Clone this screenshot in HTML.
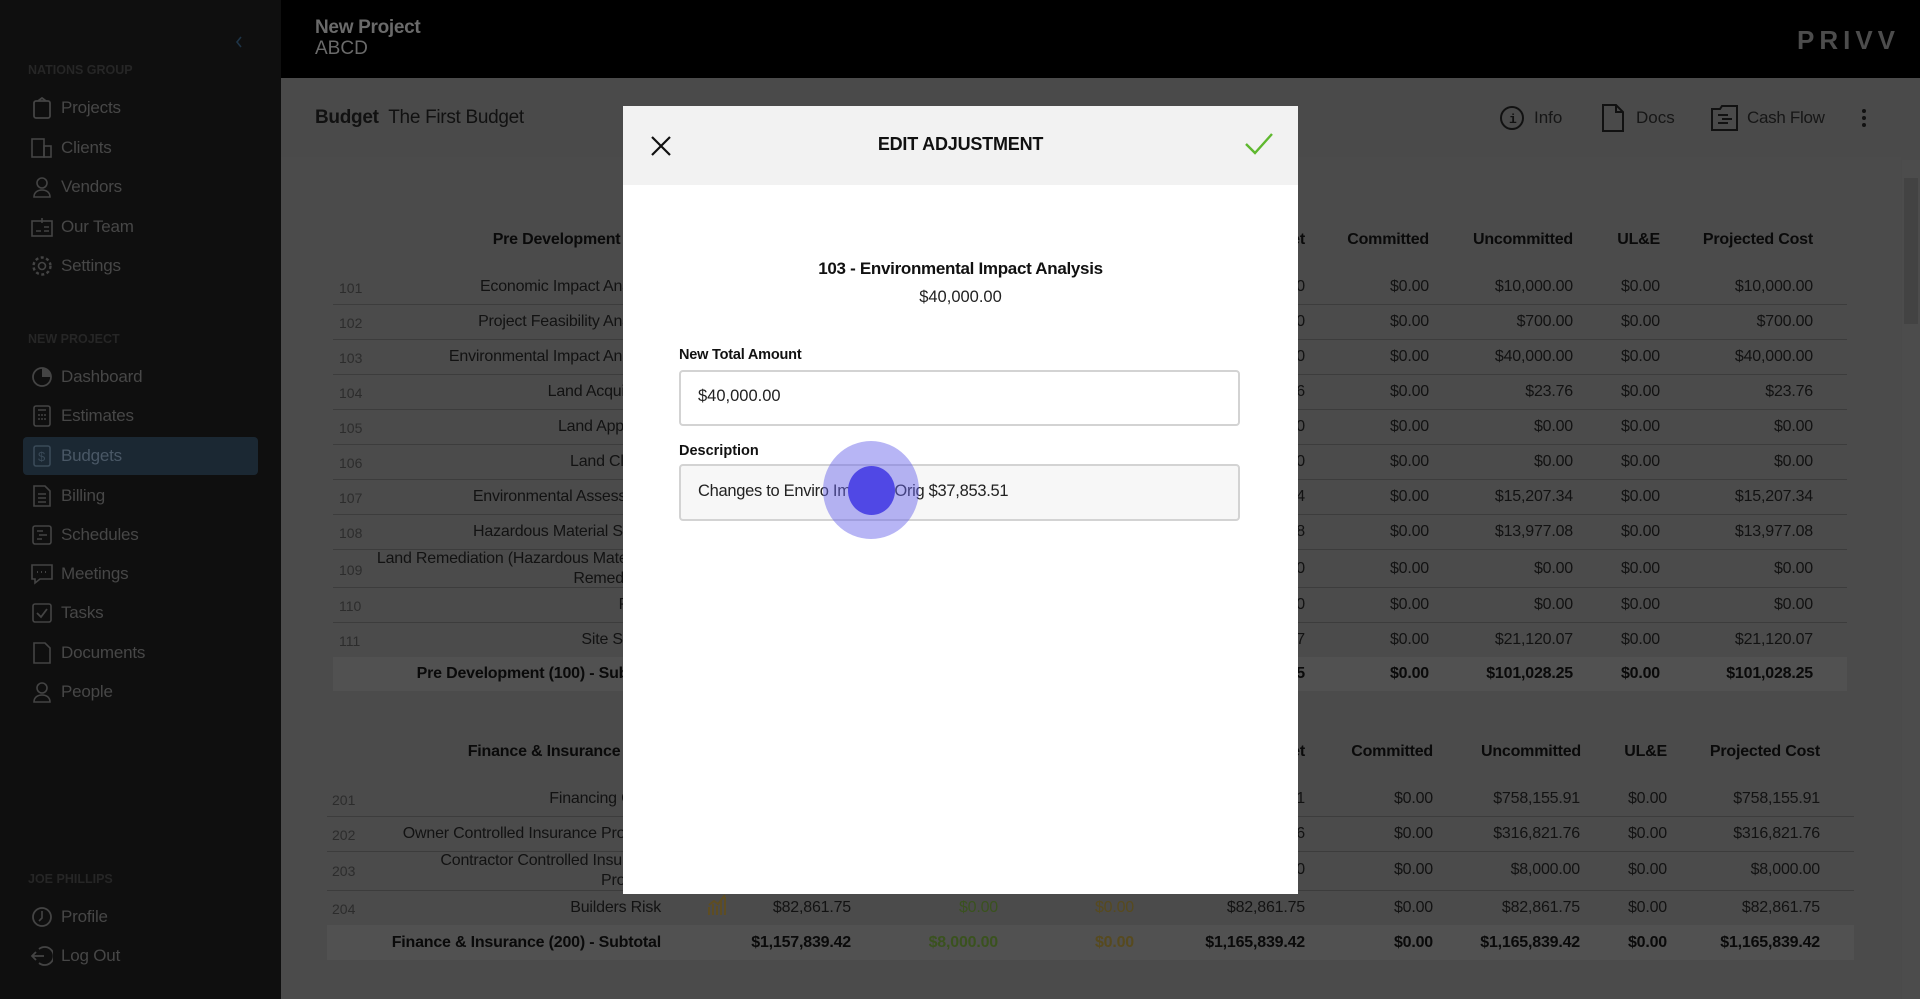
<!DOCTYPE html>
<html><head><meta charset="utf-8"><style>
*{margin:0;padding:0;box-sizing:border-box}
body{width:1920px;height:999px;overflow:hidden;background:#4a4a4a;font-family:"Liberation Sans",sans-serif;position:relative}
.a{position:absolute;white-space:nowrap}
.sb{position:absolute;left:0;top:0;width:281px;height:999px;background:#0f0f0f}
.nav{position:absolute;left:61px;font-size:17px;color:#474747;letter-spacing:-0.2px}
.grp{position:absolute;left:28px;font-size:12.5px;font-weight:bold;color:#262626}
.ic{position:absolute;left:31px;width:22px;height:22px}
.r{position:absolute;width:300px;text-align:right;font-size:16px;color:#121212;white-space:nowrap;letter-spacing:-0.2px}
.b{font-weight:bold;color:#0a0a0a}
.code{position:absolute;font-size:14px;color:#2c2c2c}
.line{position:absolute;height:1px;background:#3c3c3c}
</style></head><body>
<div class="sb">
<svg class="a" style="left:234px;top:35px" width="10" height="14" viewBox="0 0 10 14"><path d="M7 2L3 7l4 5" stroke="#1e3447" stroke-width="1.6" fill="none"/></svg>
<div class="grp" style="top:63px">NATIONS GROUP</div>
<svg class="ic" style="top:97px" viewBox="0 0 22 22"><rect x="3" y="4" width="16" height="17" rx="2" stroke="#444" stroke-width="1.8" fill="none"/><path d="M7 4l4-3 4 3" stroke="#444" stroke-width="1.8" fill="none"/></svg>
<div class="nav" style="top:98px">Projects</div>
<svg class="ic" style="top:137px" viewBox="0 0 22 22"><rect x="1" y="2" width="12" height="18" stroke="#444" stroke-width="1.6" fill="none"/><rect x="13" y="9" width="7" height="11" stroke="#444" stroke-width="1.6" fill="none"/></svg>
<div class="nav" style="top:138px">Clients</div>
<svg class="ic" style="top:176px" viewBox="0 0 22 22"><circle cx="11" cy="7" r="5" stroke="#444" stroke-width="1.6" fill="none"/><path d="M3 21c0-5 4-7 8-7s8 2 8 7z" stroke="#444" stroke-width="1.6" fill="none"/></svg>
<div class="nav" style="top:177px">Vendors</div>
<svg class="ic" style="top:216px" viewBox="0 0 22 22"><rect x="1" y="5" width="20" height="15" stroke="#444" stroke-width="1.6" fill="none"/><path d="M11 2v5M5 15h5M13 11h5M13 15h5" stroke="#444" stroke-width="1.6"/></svg>
<div class="nav" style="top:217px">Our Team</div>
<svg class="ic" style="top:255px" viewBox="0 0 22 22"><circle cx="11" cy="11" r="3.5" stroke="#444" stroke-width="1.6" fill="none"/><circle cx="11" cy="11" r="8.5" stroke="#444" stroke-width="2.4" stroke-dasharray="3 2.5" fill="none"/></svg>
<div class="nav" style="top:256px">Settings</div>
<div class="grp" style="top:332px">NEW PROJECT</div>
<svg class="ic" style="top:366px" viewBox="0 0 22 22"><circle cx="11" cy="11" r="9" stroke="#444" stroke-width="1.8" fill="none"/><path d="M11 2v9h9A9 9 0 0 0 11 2z" fill="#444"/></svg>
<div class="nav" style="top:367px">Dashboard</div>
<svg class="ic" style="top:405px" viewBox="0 0 22 22"><rect x="3" y="1" width="16" height="20" rx="2" stroke="#444" stroke-width="1.6" fill="none"/><path d="M7 5h8M7 10h2M10 10h2M13 10h2M7 14h2M10 14h2M13 14h2" stroke="#444" stroke-width="1.6"/></svg>
<div class="nav" style="top:406px">Estimates</div>
<div class="a" style="left:23px;top:437px;width:235px;height:38px;background:#1b2833;border-radius:4px"></div>
<svg class="ic" style="top:445px" viewBox="0 0 22 22"><rect x="3" y="1" width="16" height="20" rx="2" stroke="#3a4a58" stroke-width="1.6" fill="none"/><text x="7" y="16" font-size="13" fill="#3a4a58" font-family="Liberation Sans">$</text></svg>
<div class="nav" style="top:446px;color:#4a5866">Budgets</div>
<svg class="ic" style="top:485px" viewBox="0 0 22 22"><path d="M3 1h11l5 5v15H3z" stroke="#444" stroke-width="1.6" fill="none"/><path d="M7 9h8M7 13h8M7 17h8" stroke="#444" stroke-width="1.6"/></svg>
<div class="nav" style="top:486px">Billing</div>
<svg class="ic" style="top:524px" viewBox="0 0 22 22"><rect x="2" y="2" width="18" height="18" rx="2" stroke="#444" stroke-width="1.6" fill="none"/><path d="M6 7h6M8 11h8M6 15h5" stroke="#444" stroke-width="1.6"/></svg>
<div class="nav" style="top:525px">Schedules</div>
<svg class="ic" style="top:563px" viewBox="0 0 22 22"><path d="M1 2h20v14H9l-5 4v-4H1z" stroke="#444" stroke-width="1.6" fill="none"/><path d="M6 9h1M10 9h1M14 9h1" stroke="#444" stroke-width="2"/></svg>
<div class="nav" style="top:564px">Meetings</div>
<svg class="ic" style="top:602px" viewBox="0 0 22 22"><rect x="2" y="2" width="18" height="18" rx="2" stroke="#444" stroke-width="1.6" fill="none"/><path d="M6 11l4 4 6-8" stroke="#444" stroke-width="1.8" fill="none"/></svg>
<div class="nav" style="top:603px">Tasks</div>
<svg class="ic" style="top:642px" viewBox="0 0 22 22"><path d="M3 1h11l5 5v15H3z" stroke="#444" stroke-width="1.6" fill="none"/></svg>
<div class="nav" style="top:643px">Documents</div>
<svg class="ic" style="top:681px" viewBox="0 0 22 22"><circle cx="11" cy="7" r="5" stroke="#444" stroke-width="1.6" fill="none"/><path d="M3 21c0-5 4-7 8-7s8 2 8 7z" stroke="#444" stroke-width="1.6" fill="none"/></svg>
<div class="nav" style="top:682px">People</div>
<div class="grp" style="top:872px">JOE PHILLIPS</div>
<svg class="ic" style="top:906px" viewBox="0 0 22 22"><circle cx="11" cy="11" r="9" stroke="#444" stroke-width="1.8" fill="none"/><path d="M11 5v7l-3 3" stroke="#444" stroke-width="1.6" fill="none"/></svg>
<div class="nav" style="top:907px">Profile</div>
<svg class="ic" style="top:945px" viewBox="0 0 22 22"><path d="M8 4a9 9 0 1 1 0 14" stroke="#444" stroke-width="1.8" fill="none"/><path d="M1 11h12M5 7l-4 4 4 4" stroke="#444" stroke-width="1.8" fill="none"/></svg>
<div class="nav" style="top:946px">Log Out</div>
</div>

<div class="a" style="left:281px;top:0;width:1639px;height:78px;background:#000"></div>
<div class="a" style="left:315px;top:17px;font-size:19px;font-weight:bold;color:#6a6a6a;letter-spacing:-0.3px">New Project</div>
<div class="a" style="left:315px;top:38px;font-size:19px;color:#6a6a6a">ABCD</div>
<div class="a" style="left:1797px;top:25px;font-size:26px;font-weight:bold;letter-spacing:5px;color:#4c4c4c">PRIVV</div>

<div class="a" style="left:315px;top:107px;font-size:19px;color:#111;letter-spacing:-0.3px"><b>Budget</b>&nbsp; The First Budget</div>
<svg class="a" style="left:1499px;top:105px" width="26" height="26" viewBox="0 0 26 26"><circle cx="13" cy="13" r="11" stroke="#111" stroke-width="2" fill="none"/><text x="10" y="18" font-size="13" font-weight="bold" fill="#111" font-family="Liberation Mono">i</text></svg>
<div class="a" style="left:1534px;top:108px;font-size:17px;color:#161616">Info</div>
<svg class="a" style="left:1601px;top:104px" width="24" height="28" viewBox="0 0 24 28"><path d="M2 1h13l7 7v19H2z" stroke="#111" stroke-width="2" fill="none"/><path d="M15 1v7h7" stroke="#111" stroke-width="2" fill="none"/></svg>
<div class="a" style="left:1636px;top:108px;font-size:17px;color:#161616">Docs</div>
<svg class="a" style="left:1710px;top:105px" width="30" height="26" viewBox="0 0 30 26"><path d="M2 4h8l2-3h15v24H2z" stroke="#111" stroke-width="2" fill="none"/><path d="M8 10h10M12 14h10M8 18h10" stroke="#111" stroke-width="2"/></svg>
<div class="a" style="left:1747px;top:108px;font-size:17px;color:#161616;letter-spacing:-0.3px">Cash Flow</div>
<div class="a" style="left:1862px;top:109px;width:4px;height:4px;border-radius:2px;background:#111;box-shadow:0 7px 0 #111,0 14px 0 #111"></div>

<div class="a" style="left:281px;top:157px;width:1620px;height:842px;background:#4b4b4b"></div>
<div class="a" style="left:1902px;top:160px;width:18px;height:839px;background:#4c4c4c"></div>
<div class="a" style="left:1904px;top:178px;width:14px;height:146px;background:#434343"></div>

<div class="r b" style="left:361px;top:231px">Pre Development (100)</div>
<div class="r b" style="left:1005px;top:231px">Current Budget</div>
<div class="r b" style="left:1129px;top:231px">Committed</div>
<div class="r b" style="left:1273px;top:231px">Uncommitted</div>
<div class="r b" style="left:1360px;top:231px">UL&amp;E</div>
<div class="r b" style="left:1513px;top:231px">Projected Cost</div>

<div class="r b" style="left:361px;top:743px">Finance &amp; Insurance (200)</div>
<div class="r b" style="left:1005px;top:743px">Current Budget</div>
<div class="r b" style="left:1133px;top:743px">Committed</div>
<div class="r b" style="left:1281px;top:743px">Uncommitted</div>
<div class="r b" style="left:1367px;top:743px">UL&amp;E</div>
<div class="r b" style="left:1520px;top:743px">Projected Cost</div>

<div class="line" style="left:333px;top:304px;width:1514px"></div><div class="line" style="left:333px;top:339px;width:1514px"></div><div class="line" style="left:333px;top:374px;width:1514px"></div><div class="line" style="left:333px;top:409px;width:1514px"></div><div class="line" style="left:333px;top:444px;width:1514px"></div><div class="line" style="left:333px;top:479px;width:1514px"></div><div class="line" style="left:333px;top:514px;width:1514px"></div><div class="line" style="left:333px;top:549px;width:1514px"></div><div class="line" style="left:333px;top:587px;width:1514px"></div><div class="line" style="left:333px;top:622px;width:1514px"></div>
<div class="a" style="left:333px;top:657px;width:1514px;height:34px;background:#515151"></div>

<div class="code" style="left:339px;top:280px">101</div><div class="r" style="left:361px;top:278px">Economic Impact Analysis</div><div class="r" style="left:1005px;top:278px">$10,000.00</div><div class="r" style="left:1129px;top:278px">$0.00</div><div class="r" style="left:1273px;top:278px">$10,000.00</div><div class="r" style="left:1360px;top:278px">$0.00</div><div class="r" style="left:1513px;top:278px">$10,000.00</div>
<div class="code" style="left:339px;top:315px">102</div><div class="r" style="left:361px;top:313px">Project Feasibility Analysis</div><div class="r" style="left:1005px;top:313px">$700.00</div><div class="r" style="left:1129px;top:313px">$0.00</div><div class="r" style="left:1273px;top:313px">$700.00</div><div class="r" style="left:1360px;top:313px">$0.00</div><div class="r" style="left:1513px;top:313px">$700.00</div>
<div class="code" style="left:339px;top:350px">103</div><div class="r" style="left:361px;top:348px">Environmental Impact Analysis</div><div class="r" style="left:1005px;top:348px">$40,000.00</div><div class="r" style="left:1129px;top:348px">$0.00</div><div class="r" style="left:1273px;top:348px">$40,000.00</div><div class="r" style="left:1360px;top:348px">$0.00</div><div class="r" style="left:1513px;top:348px">$40,000.00</div>
<div class="code" style="left:339px;top:385px">104</div><div class="r" style="left:361px;top:383px">Land Acquisition</div><div class="r" style="left:1005px;top:383px">$23.76</div><div class="r" style="left:1129px;top:383px">$0.00</div><div class="r" style="left:1273px;top:383px">$23.76</div><div class="r" style="left:1360px;top:383px">$0.00</div><div class="r" style="left:1513px;top:383px">$23.76</div>
<div class="code" style="left:339px;top:420px">105</div><div class="r" style="left:361px;top:418px">Land Appraisal</div><div class="r" style="left:1005px;top:418px">$0.00</div><div class="r" style="left:1129px;top:418px">$0.00</div><div class="r" style="left:1273px;top:418px">$0.00</div><div class="r" style="left:1360px;top:418px">$0.00</div><div class="r" style="left:1513px;top:418px">$0.00</div>
<div class="code" style="left:339px;top:455px">106</div><div class="r" style="left:361px;top:453px">Land Closing</div><div class="r" style="left:1005px;top:453px">$0.00</div><div class="r" style="left:1129px;top:453px">$0.00</div><div class="r" style="left:1273px;top:453px">$0.00</div><div class="r" style="left:1360px;top:453px">$0.00</div><div class="r" style="left:1513px;top:453px">$0.00</div>
<div class="code" style="left:339px;top:490px">107</div><div class="r" style="left:361px;top:488px">Environmental Assessment</div><div class="r" style="left:1005px;top:488px">$15,207.34</div><div class="r" style="left:1129px;top:488px">$0.00</div><div class="r" style="left:1273px;top:488px">$15,207.34</div><div class="r" style="left:1360px;top:488px">$0.00</div><div class="r" style="left:1513px;top:488px">$15,207.34</div>
<div class="code" style="left:339px;top:525px">108</div><div class="r" style="left:361px;top:523px">Hazardous Material Survey</div><div class="r" style="left:1005px;top:523px">$13,977.08</div><div class="r" style="left:1129px;top:523px">$0.00</div><div class="r" style="left:1273px;top:523px">$13,977.08</div><div class="r" style="left:1360px;top:523px">$0.00</div><div class="r" style="left:1513px;top:523px">$13,977.08</div>
<div class="code" style="left:339px;top:562px">109</div><div class="r" style="left:361px;top:549px;line-height:20px">Land Remediation (Hazardous Materials)<br>Remediation</div><div class="r" style="left:1005px;top:560px">$0.00</div><div class="r" style="left:1129px;top:560px">$0.00</div><div class="r" style="left:1273px;top:560px">$0.00</div><div class="r" style="left:1360px;top:560px">$0.00</div><div class="r" style="left:1513px;top:560px">$0.00</div>
<div class="code" style="left:339px;top:598px">110</div><div class="r" style="left:361px;top:596px">Public</div><div class="r" style="left:1005px;top:596px">$0.00</div><div class="r" style="left:1129px;top:596px">$0.00</div><div class="r" style="left:1273px;top:596px">$0.00</div><div class="r" style="left:1360px;top:596px">$0.00</div><div class="r" style="left:1513px;top:596px">$0.00</div>
<div class="code" style="left:339px;top:633px">111</div><div class="r" style="left:361px;top:631px">Site Survey</div><div class="r" style="left:1005px;top:631px">$21,120.07</div><div class="r" style="left:1129px;top:631px">$0.00</div><div class="r" style="left:1273px;top:631px">$21,120.07</div><div class="r" style="left:1360px;top:631px">$0.00</div><div class="r" style="left:1513px;top:631px">$21,120.07</div>
<div class="r b" style="left:361px;top:665px">Pre Development (100) - Subtotal</div><div class="r b" style="left:1005px;top:665px">$101,028.25</div><div class="r b" style="left:1129px;top:665px">$0.00</div><div class="r b" style="left:1273px;top:665px">$101,028.25</div><div class="r b" style="left:1360px;top:665px">$0.00</div><div class="r b" style="left:1513px;top:665px">$101,028.25</div>

<div class="line" style="left:327px;top:816px;width:1527px"></div><div class="line" style="left:327px;top:851px;width:1527px"></div><div class="line" style="left:327px;top:890px;width:1527px"></div><div class="line" style="left:327px;top:925px;width:1527px"></div>
<div class="a" style="left:327px;top:925px;width:1527px;height:35px;background:#515151"></div>
<div class="code" style="left:332px;top:792px">201</div><div class="r" style="left:361px;top:790px">Financing Costs</div><div class="r" style="left:1005px;top:790px">$758,155.91</div><div class="r" style="left:1133px;top:790px">$0.00</div><div class="r" style="left:1280px;top:790px">$758,155.91</div><div class="r" style="left:1367px;top:790px">$0.00</div><div class="r" style="left:1520px;top:790px">$758,155.91</div>
<div class="code" style="left:332px;top:827px">202</div><div class="r" style="left:361px;top:825px">Owner Controlled Insurance Program</div><div class="r" style="left:1005px;top:825px">$316,821.76</div><div class="r" style="left:1133px;top:825px">$0.00</div><div class="r" style="left:1280px;top:825px">$316,821.76</div><div class="r" style="left:1367px;top:825px">$0.00</div><div class="r" style="left:1520px;top:825px">$316,821.76</div>
<div class="code" style="left:332px;top:863px">203</div><div class="r" style="left:361px;top:851px;line-height:20px">Contractor Controlled Insurance<br>Program</div><div class="r" style="left:1005px;top:861px">$8,000.00</div><div class="r" style="left:1133px;top:861px">$0.00</div><div class="r" style="left:1280px;top:861px">$8,000.00</div><div class="r" style="left:1367px;top:861px">$0.00</div><div class="r" style="left:1520px;top:861px">$8,000.00</div>
<div class="code" style="left:332px;top:901px">204</div><div class="r" style="left:361px;top:899px">Builders Risk</div>
<svg class="a" style="left:707px;top:893px" width="20" height="24" viewBox="0 0 20 24"><path d="M2 22V14M6 22V11M10 22V13M14 22V8M18 22V4M2 12l5-4 4 3 7-9" stroke="#5e4d22" stroke-width="2" fill="none"/></svg>
<div class="r" style="left:551px;top:899px">$82,861.75</div><div class="r" style="left:698px;top:899px;color:#3a521e">$0.00</div><div class="r" style="left:834px;top:899px;color:#574a1e">$0.00</div><div class="r" style="left:1005px;top:899px">$82,861.75</div><div class="r" style="left:1133px;top:899px">$0.00</div><div class="r" style="left:1280px;top:899px">$82,861.75</div><div class="r" style="left:1367px;top:899px">$0.00</div><div class="r" style="left:1520px;top:899px">$82,861.75</div>
<div class="r b" style="left:361px;top:934px">Finance &amp; Insurance (200) - Subtotal</div><div class="r b" style="left:551px;top:934px">$1,157,839.42</div><div class="r b" style="left:698px;top:934px;color:#3a521e">$8,000.00</div><div class="r b" style="left:834px;top:934px;color:#574a1e">$0.00</div><div class="r b" style="left:1005px;top:934px">$1,165,839.42</div><div class="r b" style="left:1133px;top:934px">$0.00</div><div class="r b" style="left:1280px;top:934px">$1,165,839.42</div><div class="r b" style="left:1367px;top:934px">$0.00</div><div class="r b" style="left:1520px;top:934px">$1,165,839.42</div>

<div class="a" style="left:623px;top:106px;width:675px;height:788px;background:#fff"></div>
<div class="a" style="left:623px;top:106px;width:675px;height:79px;background:#f2f2f2"></div>
<svg class="a" style="left:650px;top:135px" width="22" height="22" viewBox="0 0 22 22"><path d="M2 2l18 18M20 2L2 20" stroke="#111" stroke-width="2.2"/></svg>
<div class="a" style="left:623px;width:675px;top:134px;text-align:center;font-size:18px;font-weight:bold;color:#111;letter-spacing:-0.2px">EDIT ADJUSTMENT</div>
<svg class="a" style="left:1244px;top:132px" width="30" height="24" viewBox="0 0 30 24"><path d="M2 12l9 9L28 2" stroke="#5fb82f" stroke-width="2.4" fill="none"/></svg>
<div class="a" style="left:623px;width:675px;top:259px;text-align:center;font-size:17px;font-weight:bold;color:#111;letter-spacing:-0.3px">103 - Environmental Impact Analysis</div>
<div class="a" style="left:623px;width:675px;top:288px;text-align:center;font-size:16.5px;color:#222">$40,000.00</div>
<div class="a" style="left:679px;top:347px;font-size:14.5px;font-weight:bold;color:#111;letter-spacing:-0.2px">New Total Amount</div>
<div class="a" style="left:679px;top:370px;width:561px;height:56px;border:2px solid #d3d3d3;border-radius:4px;background:#fff"></div>
<div class="a" style="left:698px;top:387px;font-size:16.5px;color:#222">$40,000.00</div>
<div class="a" style="left:679px;top:443px;font-size:14.5px;font-weight:bold;color:#111">Description</div>
<div class="a" style="left:679px;top:464px;width:561px;height:57px;border:2px solid #d3d3d3;border-radius:4px;background:#f7f7f7"></div>
<div class="a" style="left:698px;top:482px;font-size:16.5px;color:#222;letter-spacing:-0.3px">Changes to Enviro Impact - Orig $37,853.51</div>
<div class="a" style="left:823px;top:441px;width:96px;height:98px;border-radius:50%;background:rgba(105,100,235,0.48)"></div>
<div class="a" style="left:848px;top:466px;width:47px;height:49px;border-radius:50%;background:#5048e5"></div>
</body></html>
